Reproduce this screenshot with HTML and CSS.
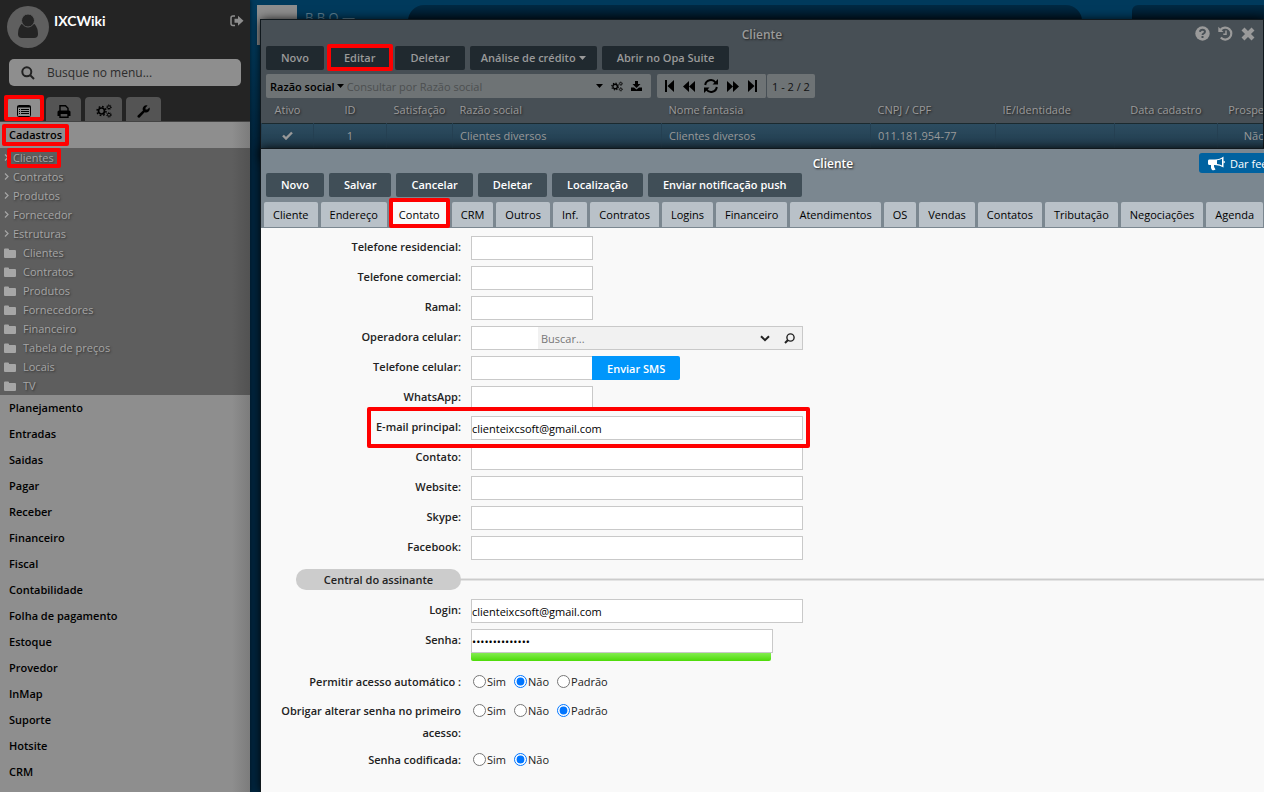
FILE: index.html
```html
<!DOCTYPE html>
<html lang="pt-BR">
<head>
<meta charset="utf-8">
<title>IXCWiki</title>
<link rel="stylesheet" href="styles.css">
</head>
<body>
<svg class="sprite" aria-hidden="true">
  <symbol id="folder" viewBox="0 0 12 10"><path d="M0 1.500Q0 .5 1 .5H4Q5 .5 5 1.500V2H11Q12 2 12 3V9Q12 10 11 10H1Q0 10 0 9Z"/></symbol>
  <symbol id="chevron" viewBox="0 0 5 7"><path d="M1 .5 4 3.500 1 6.500" fill="none" stroke="currentColor" stroke-width="1.200"/></symbol>
  <symbol id="gears" viewBox="0 0 16 14"><g fill="none" stroke="currentColor"><circle cx="5.500" cy="7" r="3" stroke-width="1.700"/><circle cx="5.500" cy="7" r="4.500" stroke-width="1.500" stroke-dasharray="1.700 1.834"/><circle cx="13" cy="3.200" r="1.500" stroke-width="1"/><circle cx="13" cy="3.200" r="2.400" stroke-width=".9" stroke-dasharray=".9 .985"/><circle cx="13" cy="10.800" r="1.500" stroke-width="1"/><circle cx="13" cy="10.800" r="2.400" stroke-width=".9" stroke-dasharray=".9 .985"/></g></symbol>
  <symbol id="caret" viewBox="0 0 7 4"><path d="M0 0H7L3.500 4Z"/></symbol>
</svg>
<aside class="sidebar">
  <header class="user">
    <svg class="avatar" viewBox="0 0 42 42"><circle cx="21" cy="21" r="21" fill="#5f5f5f"/><path d="M14.500 18Q11 22 11 28Q11 32 15 32H27Q31 32 31 28Q31 22 27.500 18Z" fill="#242424"/><circle cx="21" cy="14.500" r="6.500" fill="#242424" stroke="#5f5f5f"/></svg>
    <strong class="user-name">IXCWiki</strong>
    <button class="icon-button logout" aria-label="Sair"><svg width="14" height="12" viewBox="0 0 14 12"><path d="M5 1H3Q1 1 1 3V8.500Q1 10.500 3 10.500H5" fill="none" stroke="currentColor" stroke-width="1.500"/><path d="M4.500 3.800H8V.8L13.500 5.800 8 10.800V7.800H4.500Z"/></svg></button>
  </header>
  <label class="search">
    <svg width="14" height="14" viewBox="0 0 14 14"><circle cx="5.800" cy="5.800" r="4.500" fill="none" stroke="currentColor" stroke-width="2"/><path d="M9 9 13 13" stroke="currentColor" stroke-width="2"/></svg>
    <input type="text" placeholder="Busque no menu..." aria-label="Busque no menu">
  </label>
  <nav class="modes">
    <button class="mode mode-on marked mark-mode" aria-label="Cadastros"><svg width="14" height="12" viewBox="0 0 14 12"><rect x=".5" y=".5" width="13" height="11" rx="1" fill="none" stroke="currentColor"/><path d="M.5 1H13.500V2.500H.5ZM2 4H3V5H2ZM4 4H12V5H4ZM2 6H3V7H2ZM4 6H12V7H4ZM2 8H3V9H2ZM4 8H12V9H4Z"/></svg></button>
    <button class="mode" aria-label="Relatórios"><svg width="14" height="13" viewBox="0 0 14 13"><path d="M3 6V.7H8.500L11 3.200V6" fill="none" stroke="currentColor" stroke-width="1.400"/><path d="M2 5.500H12Q13.500 5.500 13.500 7V11H11V9H3V11H.5V7Q.5 5.500 2 5.500Z"/><path d="M3 9V12.300H11V9" fill="none" stroke="currentColor" stroke-width="1.400"/></svg></button>
    <button class="mode mode-wide" aria-label="Configurações"><svg width="16" height="14"><use href="#gears"/></svg></button>
    <button class="mode" aria-label="Ferramentas"><svg width="13" height="13" viewBox="0 0 13 13"><path d="M.7 10.500 6 5.600A3.700 3.700 0 0 1 10.600.6L8.500 2.700V4.500H10.300L12.500 2.500A3.700 3.700 0 0 1 7.600 7.200L2.700 12.400Q1.500 13 .8 12.200 0 11.300 .7 10.500Z"/></svg></button>
  </nav>
  <div class="section"><a href="#" class="marked mark-section">Cadastros</a></div>
  <ul class="tree">
    <li><a href="#"><svg class="chev"><use href="#chevron"/></svg><span class="marked mark-leaf">Clientes</span></a></li>
    <li><a href="#"><svg class="chev"><use href="#chevron"/></svg>Contratos</a></li>
    <li><a href="#"><svg class="chev"><use href="#chevron"/></svg>Produtos</a></li>
    <li><a href="#"><svg class="chev"><use href="#chevron"/></svg>Fornecedor</a></li>
    <li><a href="#"><svg class="chev"><use href="#chevron"/></svg>Estruturas</a></li>
    <li><a href="#"><svg class="folder"><use href="#folder"/></svg>Clientes</a></li>
    <li><a href="#"><svg class="folder"><use href="#folder"/></svg>Contratos</a></li>
    <li><a href="#"><svg class="folder"><use href="#folder"/></svg>Produtos</a></li>
    <li><a href="#"><svg class="folder"><use href="#folder"/></svg>Fornecedores</a></li>
    <li><a href="#"><svg class="folder"><use href="#folder"/></svg>Financeiro</a></li>
    <li><a href="#"><svg class="folder"><use href="#folder"/></svg>Tabela de preços</a></li>
    <li><a href="#"><svg class="folder"><use href="#folder"/></svg>Locais</a></li>
    <li><a href="#"><svg class="folder"><use href="#folder"/></svg>TV</a></li>
  </ul>
  <div class="section"><a href="#">Planejamento</a></div>
  <div class="section"><a href="#">Entradas</a></div>
  <div class="section"><a href="#">Saidas</a></div>
  <div class="section"><a href="#">Pagar</a></div>
  <div class="section"><a href="#">Receber</a></div>
  <div class="section"><a href="#">Financeiro</a></div>
  <div class="section"><a href="#">Fiscal</a></div>
  <div class="section"><a href="#">Contabilidade</a></div>
  <div class="section"><a href="#">Folha de pagamento</a></div>
  <div class="section"><a href="#">Estoque</a></div>
  <div class="section"><a href="#">Provedor</a></div>
  <div class="section"><a href="#">InMap</a></div>
  <div class="section"><a href="#">Suporte</a></div>
  <div class="section"><a href="#">Hotsite</a></div>
  <div class="section"><a href="#">CRM</a></div>
</aside>
<main class="desktop">
  <div class="shelf">
    <div class="thumb"></div>
    <span class="shelf-text">B B O —</span>
    <div class="panel panel-main"></div>
    <div class="panel panel-side"></div>
  </div>
  <section class="window list-window">
    <header class="titlebar">
      <h2>Cliente</h2>
      <div class="window-tools">
        <button class="icon-button" aria-label="Ajuda"><svg width="15" height="15" viewBox="0 0 15 15"><circle cx="7.500" cy="7.500" r="7.200"/><path d="M5 5.800Q5.200 3.800 7.500 3.800T10 5.800Q10 7 8.500 7.600 7.500 8 7.500 9" fill="none" stroke="#474f55" stroke-width="1.900"/><rect x="6.500" y="10" width="2" height="2" fill="#474f55"/></svg></button>
        <button class="icon-button" aria-label="Histórico"><svg width="15" height="15" viewBox="0 0 15 15"><path d="M2.600 3.800A6 6 0 1 1 2.800 11.500" fill="none" stroke="currentColor" stroke-width="2.200"/><path d="M.3.800V6H5.500Z"/><path d="M8 4.500V8.300H5.300" fill="none" stroke="currentColor" stroke-width="1.500"/></svg></button>
        <button class="icon-button" aria-label="Fechar"><svg width="14" height="14" viewBox="0 0 14 14"><path d="M2 2 12 12M12 2 2 12" stroke="currentColor" stroke-width="4.200"/></svg></button>
      </div>
    </header>
    <div class="actions">
      <button class="btn">Novo</button>
      <button class="btn marked mark-edit">Editar</button>
      <button class="btn">Deletar</button>
      <button class="btn btn-menu">Análise de crédito <svg width="7" height="4"><use href="#caret"/></svg></button>
      <button class="btn">Abrir no Opa Suite</button>
    </div>
    <div class="query">
      <div class="query-box">
        <button class="query-field">Razão social <svg width="7" height="4"><use href="#caret"/></svg></button>
        <input type="text" placeholder="Consultar por Razão social" aria-label="Consultar por Razão social">
        <button class="icon-button" aria-label="Opções"><svg width="7" height="4"><use href="#caret"/></svg></button>
        <button class="icon-button" aria-label="Configurar"><svg width="12" height="11" viewBox="0 0 16 14"><use href="#gears" width="16" height="14"/></svg></button>
        <button class="icon-button" aria-label="Exportar"><svg width="11" height="10" viewBox="0 0 11 10"><path d="M4 0H7V3H9.500L5.500 7 1.500 3H4ZM0 6.500H3L5.500 8.500 8 6.500H11V10H0Z"/></svg></button>
      </div>
      <div class="pager">
        <button class="icon-button" aria-label="Primeira"><svg width="9" height="12" viewBox="0 0 9 12"><path d="M0 0H2V12H0ZM9 0V12L2.500 6Z"/></svg></button>
        <button class="icon-button" aria-label="Anterior"><svg width="12" height="11" viewBox="0 0 12 11"><path d="M6 0V11L0 5.500ZM12 0V11L6 5.500Z"/></svg></button>
        <button class="icon-button" aria-label="Atualizar"><svg width="14" height="14" viewBox="0 0 14 14"><path d="M1.200 6A5.700 5.700 0 0 1 11.500 3.500M12.800 8A5.700 5.700 0 0 1 2.500 10.500" fill="none" stroke="currentColor" stroke-width="2"/><path d="M14 0V5.500H8.500ZM0 14V8.500H5.500Z"/></svg></button>
        <button class="icon-button" aria-label="Próxima"><svg width="12" height="11" viewBox="0 0 12 11"><path d="M0 0V11L6 5.500ZM6 0V11L12 5.500Z"/></svg></button>
        <button class="icon-button" aria-label="Última"><svg width="9" height="12" viewBox="0 0 9 12"><path d="M7 0H9V12H7ZM0 0V12L6.500 6Z"/></svg></button>
      </div>
      <span class="page-count">1 - 2 / 2</span>
    </div>
    <table class="grid">
      <colgroup><col class="c-active"><col class="c-id"><col class="c-rating"><col class="c-name"><col class="c-name"><col class="c-doc"><col class="c-identity"><col class="c-date"><col class="c-id"></colgroup>
      <thead><tr><th class="mid">Ativo</th><th class="mid">ID</th><th class="mid">Satisfação</th><th>Razão social</th><th>Nome fantasia</th><th>CNPJ / CPF</th><th>IE/Identidade</th><th class="mid">Data cadastro</th><th class="mid">Prospecto</th></tr></thead>
      <tbody><tr><td class="mid"><svg width="11" height="9" viewBox="0 0 11 9"><path d="M1 4.500 4 7.500 10 1.500" fill="none" stroke="currentColor" stroke-width="2.400"/></svg></td><td class="mid">1</td><td></td><td>Clientes diversos</td><td>Clientes diversos</td><td>011.181.954-77</td><td></td><td></td><td class="mid">Não</td></tr></tbody>
    </table>
  </section>
  <section class="window form-window">
    <header class="titlebar">
      <h2>Cliente</h2>
      <button class="feedback"><svg width="17" height="15" viewBox="0 0 17 15"><path d="M1 3.500H7Q12 3.500 15.500.5V11.500Q12 9 7 9H1.500Q0 9 0 7.500V5Q0 3.500 1 3.500Z"/><path d="M9 4.300Q12 4 14 2.700V9.400Q12 8.300 9 8.100Z" fill="#0062a0"/><path d="M3 9H6Q5.500 11.500 7.500 13.500 6 14.800 4 14Q2.500 11.500 3 9ZM15.500 4.800Q17 5 17 6T15.500 7.400Z"/></svg>Dar feedback</button>
    </header>
    <div class="actions">
      <button class="btn">Novo</button>
      <button class="btn">Salvar</button>
      <button class="btn">Cancelar</button>
      <button class="btn">Deletar</button>
      <button class="btn">Localização</button>
      <button class="btn">Enviar notificação push</button>
    </div>
    <nav class="tabs">
      <button class="tab">Cliente</button>
      <button class="tab">Endereço</button>
      <button class="tab tab-on marked mark-tab">Contato</button>
      <button class="tab">CRM</button>
      <button class="tab">Outros</button>
      <button class="tab">Inf.</button>
      <button class="tab">Contratos</button>
      <button class="tab">Logins</button>
      <button class="tab">Financeiro</button>
      <button class="tab">Atendimentos</button>
      <button class="tab">OS</button>
      <button class="tab">Vendas</button>
      <button class="tab">Contatos</button>
      <button class="tab">Tributação</button>
      <button class="tab">Negociações</button>
      <button class="tab">Agenda</button>
      <button class="tab">Arquivos</button>
    </nav>
    <form class="form">
      <div class="row"><label for="f1">Telefone residencial:</label><input id="f1" class="field short" type="text"></div>
      <div class="row"><label for="f2">Telefone comercial:</label><input id="f2" class="field short" type="text"></div>
      <div class="row"><label for="f3">Ramal:</label><input id="f3" class="field short" type="text"></div>
      <div class="row"><label for="f4">Operadora celular:</label>
        <div class="lookup"><input id="f4" class="lookup-id" type="text"><input class="lookup-text" type="text" placeholder="Buscar..." aria-label="Buscar operadora">
          <button type="button" class="icon-button" aria-label="Abrir lista"><svg width="10" height="7" viewBox="0 0 10 7"><path d="M1 1.200 5 5.200 9 1.200" fill="none" stroke="currentColor" stroke-width="2"/></svg></button>
          <button type="button" class="icon-button" aria-label="Pesquisar"><svg width="11" height="11" viewBox="0 0 11 11"><circle cx="6.500" cy="4.500" r="3.600" fill="none" stroke="currentColor" stroke-width="1.400"/><path d="M4 7 1 10" stroke="currentColor" stroke-width="2"/></svg></button>
        </div></div>
      <div class="row"><label for="f5">Telefone celular:</label><input id="f5" class="field short" type="text"><button type="button" class="sms">Enviar SMS</button></div>
      <div class="row"><label for="f6">WhatsApp:</label><input id="f6" class="field short" type="text"></div>
      <div class="row marked mark-row"><label for="f7">E-mail principal:</label><input id="f7" class="field" type="text" value="clienteixcsoft@gmail.com"></div>
      <div class="row"><label for="f8">Contato:</label><input id="f8" class="field" type="text"></div>
      <div class="row"><label for="f9">Website:</label><input id="f9" class="field" type="text"></div>
      <div class="row"><label for="f10">Skype:</label><input id="f10" class="field" type="text"></div>
      <div class="row"><label for="f11">Facebook:</label><input id="f11" class="field" type="text"></div>
      <h3 class="divider"><span>Central do assinante</span></h3>
      <div class="row"><label for="f12">Login:</label><input id="f12" class="field" type="text" value="clienteixcsoft@gmail.com"></div>
      <div class="row"><label for="f13">Senha:</label><div><input id="f13" class="field secret" type="password" value="abcdefghijklmn"><div class="strength"></div></div></div>
      <fieldset class="row choice first"><legend class="name">Permitir acesso automático :</legend>
        <div class="options"><label><input type="radio" name="r1">Sim</label><label><input type="radio" name="r1" checked>Não</label><label><input type="radio" name="r1">Padrão</label></div></fieldset>
      <fieldset class="row choice"><legend class="name">Obrigar alterar senha no primeiro acesso:</legend>
        <div class="options"><label><input type="radio" name="r2">Sim</label><label><input type="radio" name="r2">Não</label><label><input type="radio" name="r2" checked>Padrão</label></div></fieldset>
      <fieldset class="row choice"><legend class="name">Senha codificada:</legend>
        <div class="options"><label><input type="radio" name="r3">Sim</label><label><input type="radio" name="r3" checked>Não</label></div></fieldset>
    </form>
  </section>
</main>
</body>
</html>
```
FILE: styles.css
```css
*, *::after { box-sizing: border-box; }
body {
  margin: 0;
  height: 100vh;
  display: flex;
  overflow: hidden;
  font: 11px/19px "Open Sans", "Noto Sans", sans-serif;
  color: #222;
}
button, input { font: inherit; color: inherit; border: 0; padding: 0; margin: 0; }
button { background: none; white-space: nowrap; }
input { min-width: 0; background: none; }
a { color: inherit; text-decoration: none; }
svg { fill: currentColor; flex: none; }
h2, h3, ul { margin: 0; padding: 0; list-style: none; }
.sprite { display: none; }
.icon-button { display: flex; align-items: center; justify-content: center; flex: none; }

/* Red highlight drawn over an element */
.marked { position: relative; }
.marked::after {
  content: "";
  position: absolute;
  z-index: 2;
  border: 4px solid #f00;
  border-radius: 2px;
  pointer-events: none;
}
.mark-mode::after { inset: -2px -4px 0; }
.mark-section::after { inset: 0 -7px; }
.mark-leaf::after { inset: 0 -7px -1px -6px; }
.mark-edit::after { inset: -2px -3px -1px -2px; }
.mark-tab::after { inset: -4px -1px -1px; }
.mark-row::after { left: 106px; width: 443px; top: -9px; height: 41px; }

/* Sidebar */
.sidebar {
  flex: none;
  width: 250px;
  background: linear-gradient(to right, #8e8e8e 232px, #7c7c7c);
  color: #000;
  overflow: hidden;
  display: flex;
  flex-direction: column;
  box-shadow: 0 0 4px #001420;
  z-index: 1;
}
.sidebar > * { flex: none; }
.user { display: flex; padding: 6px 6px 11px 7px; background: #242424; color: #fff; }
.avatar { width: 42px; height: 42px; }
.user-name { flex: 1; margin-left: 5px; padding-top: 5px; font: bold 14px/20px Lato, sans-serif; }
.logout { height: 30px; color: #8e8e8e; }
.search {
  display: flex;
  align-items: center;
  gap: 12px;
  height: 27px;
  padding-left: 12px;
  border-radius: 5px;
  background: #8e8e8e;
  color: #222;
  box-shadow: 0 0 0 20px #242424;
  margin: 0 9px;
  clip-path: inset(0 -9px -11px);
}
.search input { flex: 1; font-size: 12px; }
.search input::placeholder { color: #2c2c2c; opacity: 1; }
.modes { display: flex; gap: 4px; padding: 11px 8px 0; height: 36px; background: #242424; border-bottom: 1px solid #444; }
.mode { display: flex; justify-content: center; align-items: center; width: 35px; border-radius: 4px 4px 0 0; background: #545454; color: #000; padding-top: 4px; }
.mode-on { width: 32px; margin-right: 2px; background: #8e8e8e; }
.mode-wide { width: 37px; }
.section { height: 26px; padding: 2px 9px; font-weight: 600; line-height: 22px; }
.section a { display: inline-block; }
.tree { background: linear-gradient(to right, #5e5e5e 232px, #525252); color: #a6a6a6; text-shadow: 1px 1px 2px #333; }
.tree a { display: flex; align-items: center; height: 19px; padding-left: 4px; }
.chev { width: 5px; height: 7px; margin-right: 4px; }
.folder { width: 12px; height: 10px; margin-right: 7px; }

/* Desktop and windows */
.desktop { flex: 1; min-width: 0; position: relative; overflow: hidden; background: linear-gradient(#003a5c 40px, #00263f 150px); }
.shelf { position: absolute; inset: 0; display: flex; padding: 5px 0 0 7px; color: #5d7f91; }
.thumb { width: 40px; height: 40px; background: #8e8e8e; flex: none; }
.shelf-text { margin: 3px 0 0 8px; width: 103px; font-size: 13px; }
.panel { height: 40px; background: linear-gradient(#002a44, #001626 15px); border-radius: 16px 16px 0 0; }
.panel-main { flex: 1; }
.panel-side { width: 132px; margin-left: 50px; border-radius: 6px 0 0 0; }
.window { position: absolute; left: 11px; box-shadow: 0 0 0 1px #10181d, 0 0 10px #000; overflow: hidden; }
.list-window { top: 20px; right: 1px; height: 140px; background: #474f55; color: #9a9a9a; }
.form-window { top: 149px; bottom: 0; width: 1144px; background: #f9f9f9; }
.titlebar { position: relative; }
.titlebar h2 { font-size: 12px; font-weight: 600; line-height: 24px; text-align: center; text-shadow: 1px 1px 2px #222; }
.list-window .titlebar { height: 26px; padding-top: 3px; }
.form-window .titlebar { height: 24px; background: #7b8790; color: #fff; padding-top: 3px; }
.window-tools { position: absolute; top: 6px; right: 8px; display: flex; gap: 8px; }
.feedback {
  position: absolute;
  left: 938px;
  top: 4px;
  height: 20px;
  padding: 0 9px;
  display: flex;
  align-items: center;
  gap: 5px;
  border-radius: 3px;
  background: #0062a0;
  color: #fff;
}
.actions { display: flex; gap: 5px; padding: 0 5px; }
.btn { height: 24px; padding: 0 15px 1px; border-radius: 2px; background: #20292f; font-weight: 600; display: flex; align-items: center; gap: 3px; }
.btn-menu { padding: 0 11px 1px; }
.form-window .actions { background: #7b8790; padding-bottom: 5px; }
.form-window .btn { background: #404e57; color: #fff; }
.query { display: flex; padding: 4px 5px 0; color: #000; }
.query > * { height: 24px; background: #6e7375; border-radius: 2px; display: flex; align-items: center; }
.query-box { width: 385px; padding: 0 9px 0 4px; margin-right: 6px; gap: 8px; }
.query-field { font-weight: 600; display: flex; align-items: center; gap: 2px; margin-right: -5px; }
.query-box input { flex: 1; }
.query-box input::placeholder { color: #4c4f50; opacity: 1; }
.pager { gap: 9px; padding: 0 8px; width: 110px; border-right: 1px solid #474f55; }
.page-count { padding: 0 5px; color: #111; }
.grid { table-layout: fixed; border-collapse: collapse; width: 1029px; }
.grid th, .grid td { text-align: left; padding: 0 7px; font-weight: normal; white-space: nowrap; line-height: 24px; }
.grid .mid { text-align: center; padding: 0; }
.grid th { height: 25px; text-shadow: 1px 1px 2px #222; }
.grid td { border-left: 1px solid #254052; height: 26px; }
.grid tbody tr { background: linear-gradient(#2c4c60, #213c4d); border-top: 1px solid #1b2a2f; }
.c-active { width: 52px; }
.c-id { width: 73px; }
.c-rating { width: 66px; }
.c-name { width: 209px; }
.c-doc { width: 125px; }
.c-identity { width: 119px; }
.c-date { width: 103px; }

/* Tabs */
.tabs { display: flex; gap: 3px; padding-left: 3px; background: #7b8790; border-bottom: 1px solid #7b8790; }
.tab { height: 25px; padding: 0 9px; flex: none; border-radius: 2px 2px 0 0; background: #b9c1c8; color: #000; }
.tab-on { background: #f9f9f9; }

/* Form */
.form { padding-top: 8px; }
.row { display: flex; min-height: 24px; margin: 0 0 6px; padding: 0; border: 0; }
.row > label, .name { width: 200px; padding: 0; margin-right: 10px; text-align: right; font-weight: 600; line-height: 22px; flex: none; }
.field { width: 332px; height: 24px; border: 1px solid #c9c9c9; background: #fff; color: #000; }
.short { width: 122px; }
.lookup { display: flex; align-items: center; width: 332px; height: 24px; border: 1px solid #c9c9c9; background: #f1f1f1; padding-right: 7px; gap: 3px; }
.lookup-id { width: 66px; height: 22px; background: #fff; }
.lookup-text { flex: 1; height: 22px; }
.lookup-text::placeholder { color: #777; opacity: 1; }
.lookup .icon-button + .icon-button { margin-left: 11px; }
.sms { height: 24px; margin-left: -1px; padding: 0 15px; background: #0096fb; color: #fff; font-weight: 600; border-radius: 0 2px 2px 0; }
.divider { display: flex; align-items: center; margin: 9px 0 9px 35px; font-size: 11px; font-weight: 600; line-height: 21px; }
.divider span { width: 165px; text-align: center; background: #ccc; border-radius: 10px; }
.divider::after { content: ""; flex: 1; height: 3px; background: #ccc; border: solid #e4e4e4; border-width: 1px 0; }
.secret { display: block; width: 302px; }
.strength { width: 300px; height: 8px; border-radius: 0 0 2px 2px; background: linear-gradient(#83ec50, #4ddb08); }
.choice { margin-bottom: 5px; }
.choice.first { margin-top: 10px; }
.name { float: left; }
.options { display: flex; gap: 8px; padding-left: 2px; }
.options label { display: flex; align-items: center; gap: 1px; height: 20px; }
.options input { width: 13px; height: 13px; }
```
